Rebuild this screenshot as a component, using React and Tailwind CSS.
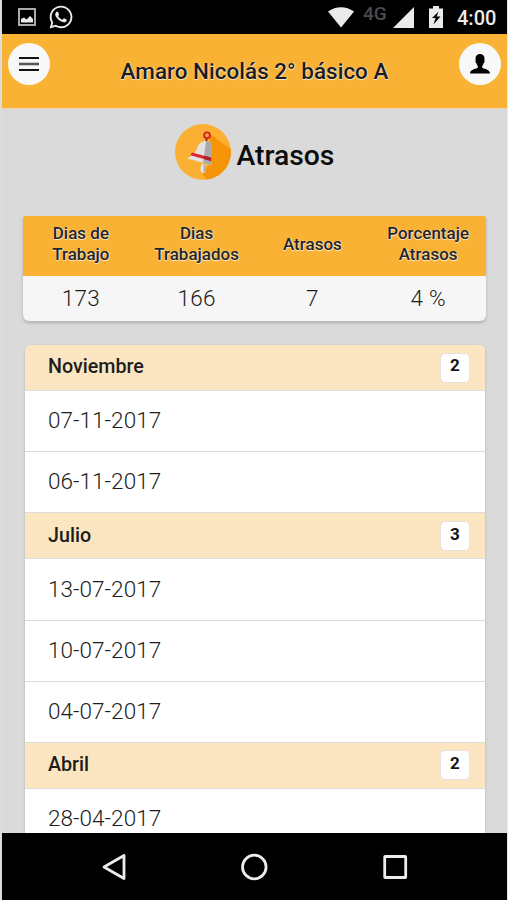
import React from "react";
import { FaWhatsapp } from "react-icons/fa";

const summary = [
  { label: ["Dias de", "Trabajo"], value: "173" },
  { label: ["Dias", "Trabajados"], value: "166" },
  { label: ["Atrasos"], value: "7" },
  { label: ["Porcentaje", "Atrasos"], value: "4 %" },
];

const months = [
  { name: "Noviembre", count: 2, dates: ["07-11-2017", "06-11-2017"] },
  { name: "Julio", count: 3, dates: ["13-07-2017", "10-07-2017", "04-07-2017"] },
  { name: "Abril", count: 2, dates: ["28-04-2017"] },
];

const outline = "[text-shadow:0_1px_1px_#ffffffc0,1px_0_1px_#ffffff90]";

function StatusBar() {
  return (
    <div className="flex h-[34px] shrink-0 items-center bg-black pl-[16px] pr-[10px] text-[#ebebeb]">
      <svg className="h-[18px] w-[18px] shrink-0" viewBox="0 0 18 18">
        <rect x="1" y="1" width="16" height="16" fill="none" stroke="#bdbdbd" strokeWidth="1.8" />
        <path d="M3 14.5V11l3-1.500 2.500 2L12 8l3 3v3.500z" fill="#ebebeb" />
      </svg>
      <FaWhatsapp className="ml-[12px] h-[26px] w-[26px] shrink-0" />
      <svg className="ml-auto h-[21px] w-[26px] shrink-0" viewBox="0 0 26 21">
        <path d="M0 4.500C8-1.200 18-1.200 26 4.500L13 20.500z" fill="#ebebeb" />
      </svg>
      <span className="ml-[9px] w-[25px] pb-[8px] text-[19px] font-medium leading-none text-[#4b4b4b]">4G</span>
      <svg className="ml-[5px] h-[21px] w-[21px] shrink-0" viewBox="0 0 21 21">
        <path d="M21 0v21H0z" fill="#ebebeb" />
      </svg>
      <svg className="ml-[15px] h-[22px] w-[14px] shrink-0" viewBox="0 0 14 22">
        <path d="M4 0h6v2.500h4V22H0V2.500h4z" fill="#ebebeb" />
        <path d="M9.500 5.500 3 12h3.500l-2 6.500 7-8H7.700z" fill="#000" />
      </svg>
      <span className="ml-[14px] mt-[2px] w-[40px] whitespace-nowrap text-[20px] font-medium leading-none">4:00</span>
    </div>
  );
}

function Header() {
  return (
    <header className="flex h-[75px] shrink-0 items-start justify-between border-b border-[#ecd3a8] bg-[#f9b233] pl-[6px] pr-[6px] pt-[9px]">
      <button className="flex h-[42px] w-[42px] items-center justify-center rounded-full bg-[#f8f8f8]">
        <svg className="h-[16px] w-[20px]" viewBox="0 0 20 16">
          <path d="M0 2h20M0 14h20" stroke="#111" strokeWidth="2" />
          <path d="M0 8h20" stroke="#555" strokeWidth="2.500" />
        </svg>
      </button>
      <h1 className={`mt-[13px] whitespace-nowrap text-[22.500px] font-medium leading-[30px] text-[#1c1c1c] ${outline}`}>
        Amaro Nicolás 2° básico A
      </h1>
      <button className="flex h-[42px] w-[42px] items-center justify-center rounded-full bg-[#f8f8f8]">
        <svg className="h-[20px] w-[20px]" viewBox="0 0 20 20">
          <path
            d="M10 0C7.300 0 5.500 1.700 5.500 4.500c0 .9 0 1.400.2 2-.7.800 0 2.300.6 2.500.4 1.300.9 2.200 1.500 2.900v1.600C7.400 15 0 14.700 0 19.500h20c0-4.800-7.400-4.500-7.800-6v-1.600c.6-.7 1.100-1.600 1.500-2.900.6-.2 1.300-1.700.6-2.500.2-.6.2-1.100.2-2C14.500 1.700 12.700 0 10 0z"
            fill="#000"
          />
        </svg>
      </button>
    </header>
  );
}

function BellIcon() {
  return (
    <svg className="h-[56px] w-[56px] shrink-0" viewBox="0 0 56 56">
      <defs>
        <clipPath id="disc">
          <circle cx="28" cy="28" r="28" />
        </clipPath>
      </defs>
      <g clipPath="url(#disc)">
        <rect width="56" height="56" fill="#fbb033" />
        <path d="M34 9 62 30 48 62H38L27 50l9-12z" fill="#f59406" />
      </g>
      <circle cx="32" cy="11.300" r="2.900" fill="none" stroke="#d3222a" strokeWidth="1.900" />
      <rect x="30.500" y="14" width="2" height="4" fill="#a8292c" />
      <ellipse cx="28.300" cy="44.500" rx="2.800" ry="4.500" fill="#e3e3e3" />
      <path d="M28.800 40.200c3 1 3 7.500-.3 8.800z" fill="#aaa" />
      <path d="M31 17c-5.500 0-8 3.500-9.500 9l-3 4.500-6.500 4 24.500 6.500-1-6 1-8c.6-6-.5-10-5.500-10z" fill="#e2e2e2" />
      <path d="M31 17 28.200 38.800l8.300 2.200-1-6 1-8c.6-6-.5-10-5.500-10z" fill="#aaa9a9" />
      <path d="m17 28.500 19.200 5.200-.2 3.300-20.500-5.800z" fill="#dc2730" />
      <path d="m29.300 31.800 6.900 1.900-.2 3.300-7.200-2z" fill="#b51e29" />
    </svg>
  );
}

function Summary() {
  return (
    <section className="mx-[21px] mt-[36px] shrink-0 overflow-hidden rounded-b-[6px] rounded-t-[2px] bg-[#f6f6f6] shadow-[0_2px_3px_#00000030]">
      <div className="grid h-[60px] grid-cols-4 items-center bg-[#f9b233] pb-[4px]">
        {summary.map((c) => (
          <div key={c.label.join()} className={`text-center text-[17px] font-medium leading-[21px] text-[#242424] ${outline}`}>
            {c.label.map((line) => (
              <div key={line}>{line}</div>
            ))}
          </div>
        ))}
      </div>
      <div className="grid h-[45px] grid-cols-4 items-center text-center text-[22.500px] font-light leading-[33px] tracking-[0.300px] text-[#1c1c1c]">
        {summary.map((c) => (
          <div key={c.value}>{c.value}</div>
        ))}
      </div>
    </section>
  );
}

function Month({ name, count, dates }) {
  return (
    <div>
      <div className="flex h-[46px] items-center justify-between border-b border-[#dedede] bg-[#fbe6c1] pl-[23px] pr-[15px]">
        <span className="pb-[1px] text-[19.700px] font-medium text-[#1d1d1d]">{name}</span>
        <span className="flex h-[30px] w-[30px] items-center justify-center rounded-[5px] border border-[#e7e1d9] bg-white pb-[3px] text-[17px] font-bold text-[#151515]">
          {count}
        </span>
      </div>
      {dates.map((d) => (
        <div key={d} className="flex h-[61.200px] items-center border-b border-[#dcdcdc] pl-[23px] text-[22.500px] font-light tracking-[0.050px] text-[#1c1c1c]">
          {d}
        </div>
      ))}
    </div>
  );
}

function NavBar() {
  return (
    <nav className="grid h-[67px] shrink-0 grid-cols-3 bg-black pl-[42px] pr-[42px]">
      {[
        <path key="back" d="M24 2.500v23L4 14z" strokeLinejoin="round" />,
        <circle key="home" cx="14.300" cy="14" r="11.800" />,
        <rect key="recent" x="3.700" y="3.500" width="21" height="21" rx="0.500" />,
      ].map((shape) => (
        <div key={shape.key} className="flex justify-center pt-[20px]">
          <svg className="h-[28px] w-[28px]" viewBox="0 0 28 28" fill="none" stroke="#ececec" strokeWidth="2.800">
            {shape}
          </svg>
        </div>
      ))}
    </nav>
  );
}

export default function App() {
  return (
    <div className="h-[900px] w-[508px] border-l-2 border-r border-l-[#dcdcdc] border-r-[#e8e8e8] font-['Roboto',sans-serif]">
      <div className="flex h-full flex-col overflow-hidden bg-[#dadada]">
        <StatusBar />
        <Header />
        <main className="flex min-h-0 flex-1 flex-col overflow-hidden">
          <div className="mt-[15px] flex shrink-0 items-center justify-center gap-[6px]">
            <BellIcon />
            <h2 className="mt-[8px] text-[28.300px] font-medium leading-[30px] text-[#0c0c0c]">Atrasos</h2>
          </div>
          <Summary />
          <section className="ml-[23px] mr-[22px] mt-[24px] shrink-0 overflow-hidden rounded-t-[6px] bg-white shadow-[0_1px_3px_#00000030]">
            {months.map((m) => (
              <Month key={m.name} {...m} />
            ))}
          </section>
        </main>
        <NavBar />
      </div>
    </div>
  );
}
